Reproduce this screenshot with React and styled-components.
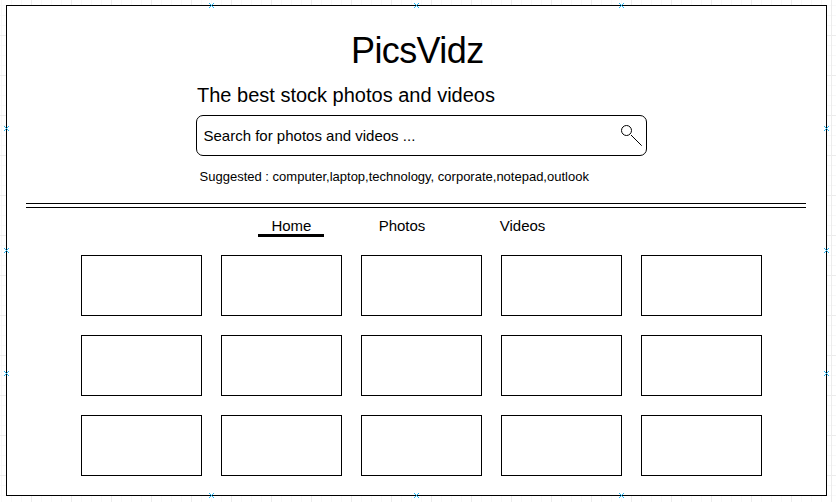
import React from "react";
import styled, { createGlobalStyle } from "styled-components";

const GlobalStyle = createGlobalStyle`
  * { box-sizing: border-box; }
  body {
    margin: 0;
    color: #000;
    font-family: "Liberation Sans", Helvetica, Arial, sans-serif;
  }
`;

const Canvas = styled.div`
  width: 836px;
  height: 502px;
  padding: 5px 9px 6px 6px;
  overflow: hidden;
  background-color: #fff;
  background-image:
    linear-gradient(to right, #ececec 1px, transparent 1px),
    linear-gradient(to bottom, #ececec 1px, transparent 1px),
    linear-gradient(to right, #f8f8f8 1px, transparent 1px),
    linear-gradient(to bottom, #f8f8f8 1px, transparent 1px);
  background-size: 40px 40px, 40px 40px, 10px 10px, 10px 10px;
  background-position: 31px 0, 0 35px, 1px 0, 0 5px;
`;

const Frame = styled.main`
  position: relative;
  display: flex;
  flex-direction: column;
  width: 821px;
  height: 491px;
  border: 1px solid #000;
  background: #fff;
`;

const Header = styled.header`
  display: flex;
  flex-direction: column;
  height: 197px;
  padding: 24px 0 0 189px;
`;

const Title = styled.h1`
  margin: 0 0 0 155px;
  height: 42px;
  font-size: 36px;
  font-weight: 400;
  line-height: 42px;
  letter-spacing: -0.6px;
  white-space: nowrap;
`;

const Tagline = styled.h2`
  margin: 11px 0 0 1px;
  height: 24px;
  font-size: 20px;
  font-weight: 400;
  line-height: 24px;
  white-space: nowrap;
`;

const SearchBox = styled.div`
  display: flex;
  justify-content: space-between;
  width: 451px;
  height: 41px;
  margin-top: 8px;
  padding: 0 4px 0 6.5px;
  border: 1px solid #000;
  border-radius: 7px;
  font-size: 15px;
  line-height: 40px;
  white-space: nowrap;
`;

const SearchIcon = styled.svg`
  width: 22px;
  height: 24px;
  margin-top: 8px;
`;

const Suggestions = styled.p`
  margin: 12px 0 0 3.6px;
  font-size: 13px;
  line-height: 18px;
  white-space: nowrap;
`;

const DoubleRule = styled.hr`
  flex: none;
  width: 780px;
  height: 5px;
  margin: 0 0 0 19px;
  border: solid #000;
  border-width: 1px 0;
`;

const Nav = styled.nav`
  display: flex;
  height: 47px;
  padding: 8px 0 0 251.4px;
`;

const Tab = styled.a`
  width: ${({ $width }) => $width}px;
  height: 21px;
  margin-right: ${({ $gap }) => $gap}px;
  border-bottom: ${({ $active }) => ($active ? "3px solid #000" : "3px solid transparent")};
  font-size: 15px;
  line-height: 20px;
  text-align: center;
`;

const Gallery = styled.section`
  display: grid;
  grid-template-columns: repeat(5, 121px);
  grid-auto-rows: 61px;
  gap: 19px;
  padding-left: 74px;
`;

const Thumbnail = styled.div`
  border: 1px solid #000;
`;

const Anchor = styled.svg`
  position: absolute;
  left: ${({ $x }) => $x - 3}px;
  top: ${({ $y }) => $y - 3}px;
  width: 5px;
  height: 5px;
  stroke: #29b6f2;
`;

const tabs = [
  { label: "Home", width: 66, gap: 44.6, active: true },
  { label: "Photos", width: 66, gap: 54.6 },
  { label: "Videos", width: 66, gap: 0 },
];

const anchors = [
  [205, 0], [410, 0], [615, 0],
  [205, 490], [410, 490], [615, 490],
  [0, 123], [0, 245], [0, 368],
  [820, 123], [820, 245], [820, 368],
];

export default function App() {
  return (
    <>
      <GlobalStyle />
      <Canvas>
        <Frame>
          <Header>
            <Title>PicsVidz</Title>
            <Tagline>The best stock photos and videos</Tagline>
            <SearchBox>
              <span>Search for photos and videos ...</span>
              <SearchIcon viewBox="0 0 22 24" fill="none" stroke="#000">
                <circle cx="6.5" cy="6.5" r="5" />
                <path d="M11 11L21.7 21.7" />
              </SearchIcon>
            </SearchBox>
            <Suggestions>
              Suggested : computer,laptop,technology, corporate,notepad,outlook
            </Suggestions>
          </Header>
          <DoubleRule />
          <Nav>
            {tabs.map((tab) => (
              <Tab key={tab.label} $width={tab.width} $gap={tab.gap} $active={tab.active}>
                {tab.label}
              </Tab>
            ))}
          </Nav>
          <Gallery>
            {Array.from({ length: 15 }, (_, i) => (
              <Thumbnail key={i} />
            ))}
          </Gallery>
          {anchors.map(([x, y]) => (
            <Anchor key={`${x}-${y}`} $x={x} $y={y} viewBox="0 0 5 5">
              <path d="M0 0L5 5M5 0L0 5" />
            </Anchor>
          ))}
        </Frame>
      </Canvas>
    </>
  );
}
